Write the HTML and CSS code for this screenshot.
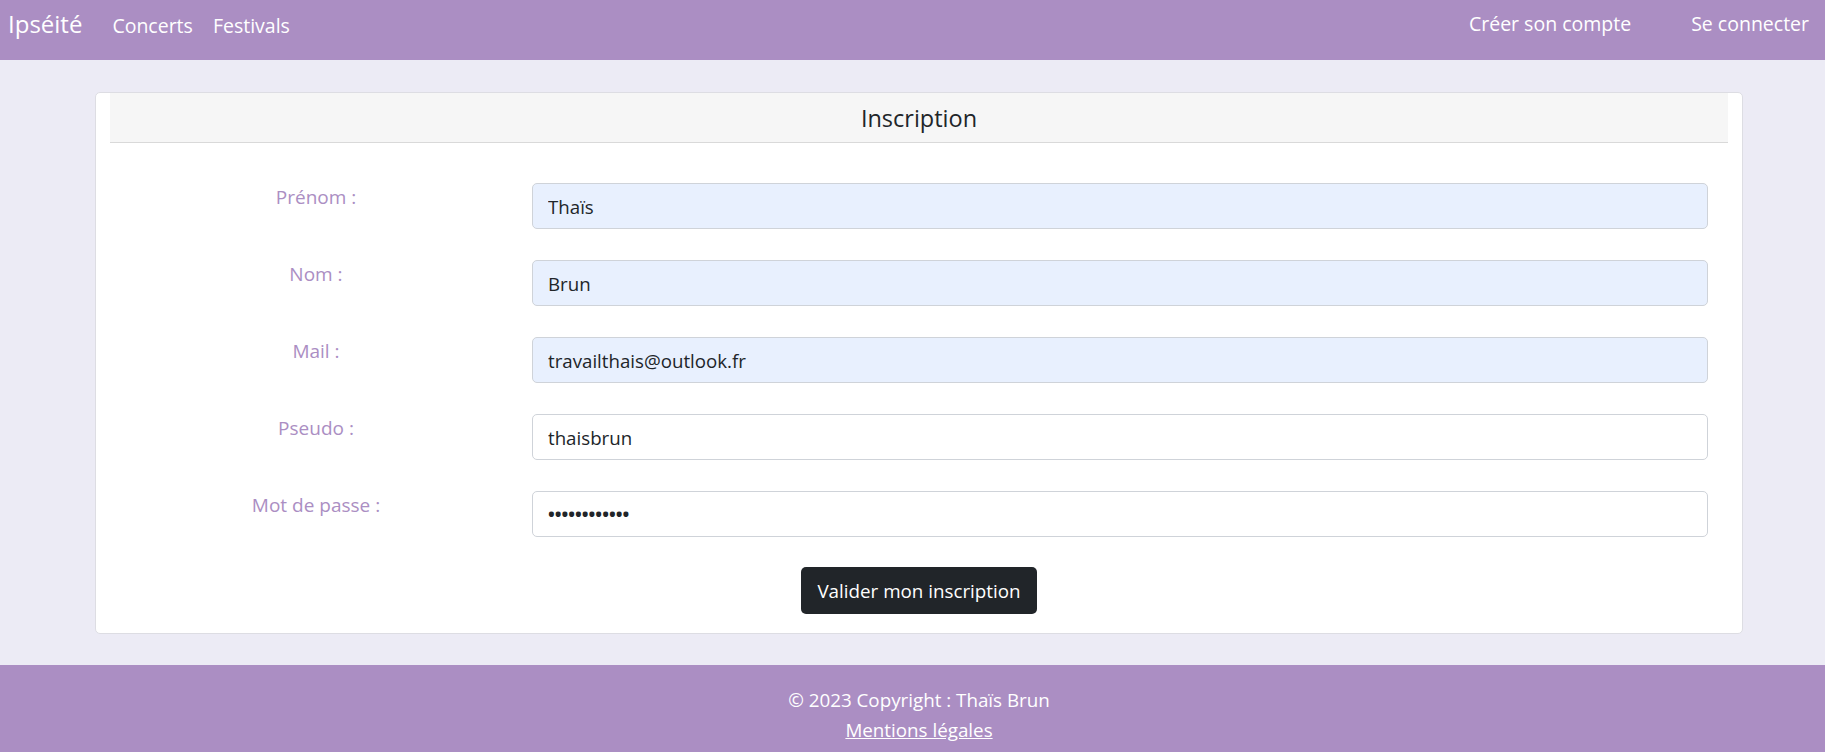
FILE: index.html
```html
<!DOCTYPE html>
<html lang="fr">
<head>
<meta charset="utf-8">
<title>Inscription - Ipséité</title>
<link rel="stylesheet" href="styles.css">
</head>
<body>
<nav class="navbar">
  <div class="nav-left">
    <a class="brand" href="#">Ipséité</a>
    <a class="nav-link" href="#">Concerts</a>
    <a class="nav-link" href="#">Festivals</a>
  </div>
  <div class="nav-right">
    <a class="nav-link" href="#">Créer son compte</a>
    <a class="nav-link" href="#">Se connecter</a>
  </div>
</nav>
<main class="main">
  <div class="card">
    <div class="card-header">Inscription</div>
    <form class="card-body">
      <div class="form-row">
        <label class="form-label">Prénom :</label>
        <input class="form-input autofill" type="text" value="Thaïs">
      </div>
      <div class="form-row">
        <label class="form-label">Nom :</label>
        <input class="form-input autofill" type="text" value="Brun">
      </div>
      <div class="form-row">
        <label class="form-label">Mail :</label>
        <input class="form-input autofill" type="text" value="travailthais@outlook.fr">
      </div>
      <div class="form-row">
        <label class="form-label">Pseudo :</label>
        <input class="form-input" type="text" value="thaisbrun">
      </div>
      <div class="form-row">
        <label class="form-label">Mot de passe :</label>
        <input class="form-input password" type="password" value="thaisbrun123">
      </div>
      <div class="submit-row">
        <button class="btn" type="button">Valider mon inscription</button>
      </div>
    </form>
  </div>
</main>
<footer class="footer">
  <p class="copyright">© 2023 Copyright : Thaïs Brun</p>
  <a class="legal" href="#">Mentions légales</a>
</footer>
</body>
</html>
```
FILE: styles.css
```css
* { box-sizing: border-box; }
html, body { margin: 0; padding: 0; }
body {
  background: #ecebf5;
  font-family: "Open Sans", "Liberation Sans", sans-serif;
  color: #212529;
}
a { text-decoration: none; color: inherit; }

.navbar {
  height: 60px;
  background: #ab8ec3;
  display: flex;
  justify-content: space-between;
  align-items: center;
  padding: 0 16px 14px 8px;
  color: #fff;
}
.nav-left, .nav-right { display: flex; align-items: baseline; }
.brand { font-size: 24px; margin-right: 30px; }
.nav-left .nav-link { margin-right: 20px; }
.nav-right .nav-link { margin-left: 60px; }
.nav-link { font-size: 19.5px; color: #fff; }

.main { padding: 32px 82px 31px 95px; }
.card {
  background: #fff;
  border: 1px solid #dddde3;
  border-radius: 5px;
  padding: 0 14px 19px 14px;
}
.card-header {
  background: #f6f6f6;
  border-bottom: 1px solid #d9d9d9;
  height: 50px;
  display: flex;
  align-items: center;
  justify-content: center;
  font-size: 23.5px;
  color: #212529;
}
.card-body { padding: 40px 0 0 0; margin: 0; }
.form-row {
  display: flex;
  align-items: flex-start;
  margin-bottom: 31px;
}
.form-label {
  width: 412px;
  flex: none;
  text-align: center;
  color: #ab8ec3;
  font-size: 19px;
  line-height: 28px;
  padding-top: 0;
}
.form-input {
  flex: 1;
  margin-left: 10px;
  margin-right: 20px;
  height: 46px;
  border: 1px solid #cfd3d9;
  border-radius: 5px;
  padding: 0 15px;
  font-family: inherit;
  font-size: 18.7px;
  color: #212529;
  background: #fff;
  outline: none;
}
.form-input.autofill { background: #e8f0fe; }
.form-input.password { font-size: 18px; font-weight: 700; letter-spacing: 0; }
.submit-row {
  display: flex;
  justify-content: center;
  margin-top: -1px;
}
.btn {
  background: #212529;
  color: #fff;
  border: none;
  border-radius: 5px;
  height: 47px;
  padding: 0 16px;
  font-family: inherit;
  font-size: 18.8px;
}

.footer {
  background: #ab8ec3;
  color: #fff;
  text-align: center;
  padding: 21px 0 40px 13px;
  font-size: 18.8px;
}
.copyright { margin: 0 0 2px; line-height: 28px; }
.legal { text-decoration: underline; line-height: 28px; }
```
